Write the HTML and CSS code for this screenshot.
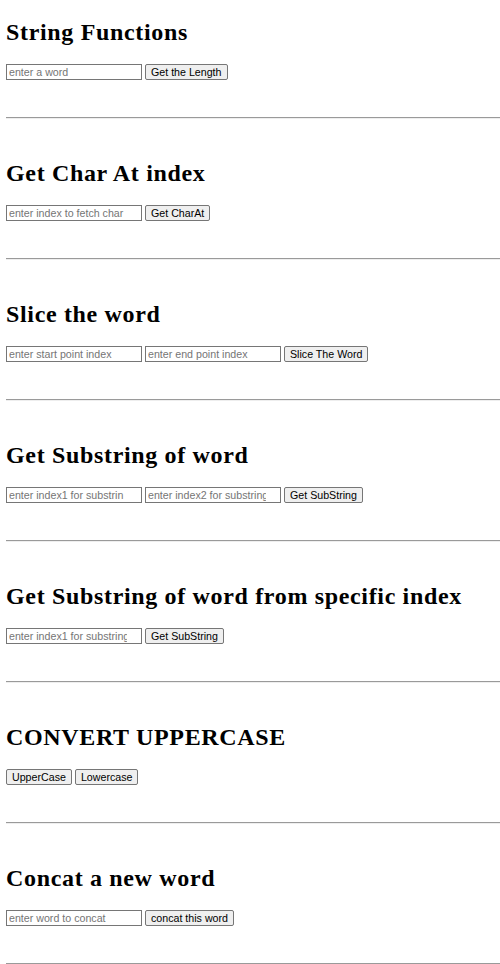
FILE: index.html
```html
<!DOCTYPE html>
<html>
<head>
<meta charset="utf-8">
<title>String Functions</title>
<link rel="stylesheet" href="styles.css">
</head>
<body>
<section class="block">
  <h2 class="title">String Functions</h2>
  <div class="row">
    <input class="field" type="text" placeholder="enter a word">
    <button class="btn">Get the Length</button>
  </div>
  <hr class="rule">
</section>
<section class="block">
  <h2 class="title">Get Char At index</h2>
  <div class="row">
    <input class="field num" type="text" placeholder="enter index to fetch char">
    <button class="btn">Get CharAt</button>
  </div>
  <hr class="rule">
</section>
<section class="block">
  <h2 class="title">Slice the word</h2>
  <div class="row">
    <input class="field num" type="text" placeholder="enter start point index">
    <input class="field num" type="text" placeholder="enter end point index">
    <button class="btn">Slice The Word</button>
  </div>
  <hr class="rule">
</section>
<section class="block">
  <h2 class="title">Get Substring of word</h2>
  <div class="row">
    <input class="field num" type="text" placeholder="enter index1 for substrin">
    <input class="field num" type="text" placeholder="enter index2 for substring">
    <button class="btn">Get SubString</button>
  </div>
  <hr class="rule">
</section>
<section class="block">
  <h2 class="title">Get Substring of word from specific index</h2>
  <div class="row">
    <input class="field num" type="text" placeholder="enter index1 for substring">
    <button class="btn">Get SubString</button>
  </div>
  <hr class="rule">
</section>
<section class="block">
  <h2 class="title">CONVERT UPPERCASE</h2>
  <div class="row">
    <button class="btn">UpperCase</button>
    <button class="btn">Lowercase</button>
  </div>
  <hr class="rule">
</section>
<section class="block">
  <h2 class="title">Concat a new word</h2>
  <div class="row">
    <input class="field" type="text" placeholder="enter word to concat">
    <button class="btn">concat this word</button>
  </div>
  <hr class="rule">
</section>
</body>
</html>
```

FILE: styles.css
```css
html, body {
  margin: 0;
  background: #ffffff;
}
body {
  padding: 18px 0 0 6px;
  font-family: "Liberation Serif", "Times New Roman", serif;
  color: #000000;
  overflow-x: hidden;
}
.title {
  margin: 0 0 18px 0;
  font-size: 24px;
  line-height: 28px;
  font-weight: bold;
  letter-spacing: 0.66px;
  white-space: nowrap;
}
.row {
  display: flex;
  gap: 3px;
  height: 16px;
  align-items: stretch;
}
.field {
  box-sizing: border-box;
  width: 136px;
  height: 16px;
  margin: 0;
  padding: 0 2px;
  border: 1px solid #767676;
  border-radius: 0;
  font-family: "Liberation Sans", Arial, sans-serif;
  font-size: 10.67px;
  color: #000000;
  background: #ffffff;
  outline: none;
}
.num {
  padding-right: 14px;
}
.field::placeholder {
  color: #757575;
  opacity: 1;
}
.btn {
  box-sizing: border-box;
  height: 16px;
  margin: 0;
  padding: 0 5px;
  border: 1px solid #767676;
  border-radius: 2px;
  background: #efefef;
  font-family: "Liberation Sans", Arial, sans-serif;
  font-size: 10.67px;
  line-height: 14px;
  color: #000000;
}
.rule {
  margin: 37px 0 40px 0;
  height: 0;
  border: 0;
  border-top: 1px solid #9a9a9a;
  border-bottom: 1px solid #eeeeee;
}
```
